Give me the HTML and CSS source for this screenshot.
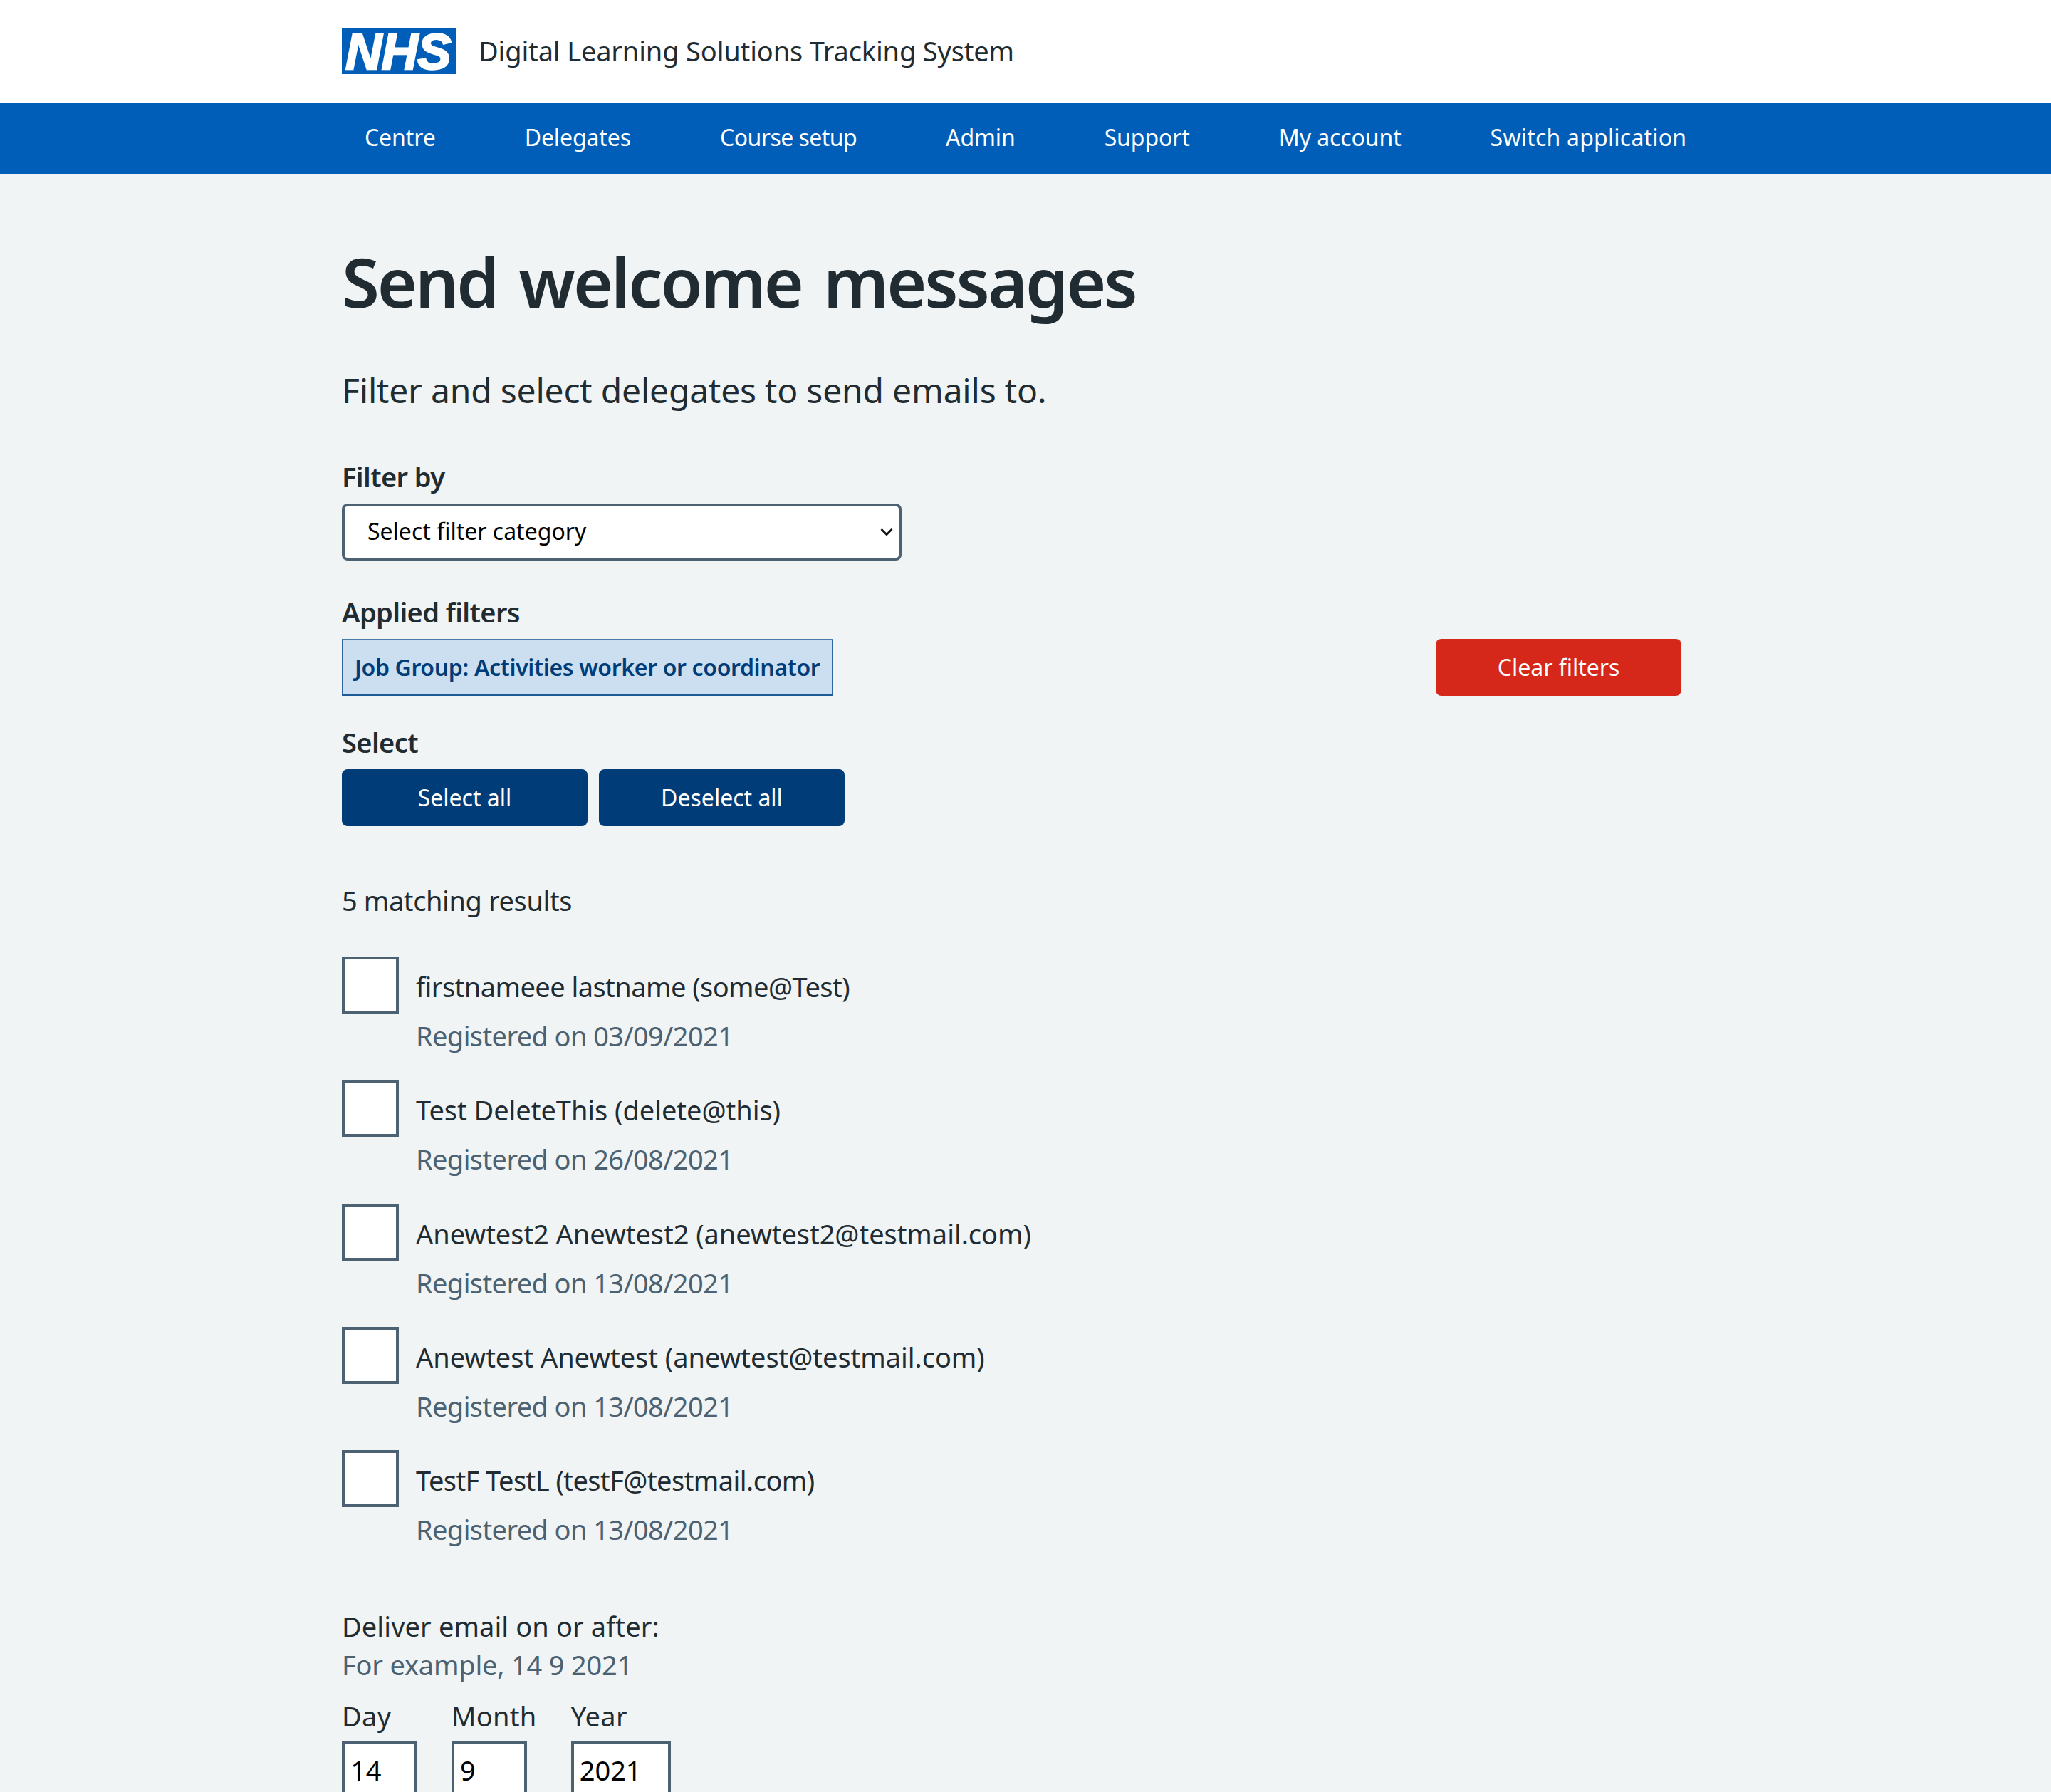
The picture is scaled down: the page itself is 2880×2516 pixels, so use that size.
FILE: index.html
```html
<!DOCTYPE html>
<html lang="en">
<head>
    <meta charset="UTF-8">
    <title>Send welcome messages</title>
    <link rel="stylesheet" href="styles.css">
</head>
<body>
    <header class="site-header">
        <div class="container header-row">
            <svg class="nhs-logo" xmlns="http://www.w3.org/2000/svg" width="160" height="64" viewBox="0 0 160 64">
                <rect width="160" height="64" fill="#005eb8"/>
                <text x="5" y="57" class="nhs-logo-text" textLength="148" lengthAdjust="spacingAndGlyphs">NHS</text>
            </svg>
            <span class="site-name">Digital Learning Solutions Tracking System</span>
        </div>
    </header>

    <nav class="site-nav">
        <ul class="container nav-list">
            <li><a href="#">Centre</a></li>
            <li><a href="#">Delegates</a></li>
            <li><a class="nav-tight" href="#">Course setup</a></li>
            <li><a href="#">Admin</a></li>
            <li><a href="#">Support</a></li>
            <li><a href="#">My account</a></li>
            <li><a class="nav-wide" href="#">Switch application</a></li>
        </ul>
    </nav>

    <main class="container main">
        <h1>Send welcome messages</h1>
        <p class="lead">Filter and select delegates to send emails to.</p>

        <label class="label-bold" for="filter-by">Filter by</label>
        <select class="select" id="filter-by">
            <option>Select filter category</option>
        </select>

        <div class="label-bold applied-label">Applied filters</div>
        <div class="filter-row">
            <span class="filter-tag">Job Group: Activities worker or coordinator</span>
            <a class="button button-red" href="#">Clear filters</a>
        </div>

        <div class="label-bold select-label">Select</div>
        <div class="button-row">
            <a class="button button-dark" href="#">Select all</a>
            <a class="button button-dark" href="#">Deselect all</a>
        </div>

        <p class="results-count">5 matching results</p>

        <div class="check-list">
            <div class="check-item">
                <span class="check-box"></span>
                <div>
                    <div class="check-name check-name-tight">firstnameee lastname (some@Test)</div>
                    <div class="hint">Registered on 03/09/2021</div>
                </div>
            </div>
            <div class="check-item">
                <span class="check-box"></span>
                <div>
                    <div class="check-name">Test DeleteThis (delete@this)</div>
                    <div class="hint">Registered on 26/08/2021</div>
                </div>
            </div>
            <div class="check-item">
                <span class="check-box"></span>
                <div>
                    <div class="check-name">Anewtest2 Anewtest2 (anewtest2@testmail.com)</div>
                    <div class="hint">Registered on 13/08/2021</div>
                </div>
            </div>
            <div class="check-item">
                <span class="check-box"></span>
                <div>
                    <div class="check-name">Anewtest Anewtest (anewtest@testmail.com)</div>
                    <div class="hint">Registered on 13/08/2021</div>
                </div>
            </div>
            <div class="check-item">
                <span class="check-box"></span>
                <div>
                    <div class="check-name check-name-tight">TestF TestL (testF@testmail.com)</div>
                    <div class="hint">Registered on 13/08/2021</div>
                </div>
            </div>
        </div>

        <div class="date-title">Deliver email on or after:</div>
        <div class="hint date-hint">For example, 14 9 2021</div>
        <div class="date-fields">
            <div class="date-field">
                <label for="day">Day</label>
                <input class="date-input" id="day" value="14">
            </div>
            <div class="date-field">
                <label for="month">Month</label>
                <input class="date-input" id="month" value="9">
            </div>
            <div class="date-field">
                <label for="year">Year</label>
                <input class="date-input date-input-year" id="year" value="2021">
            </div>
        </div>
    </main>
</body>
</html>
```

FILE: styles.css
```css
:root {
    --blue: #005eb8;
    --dark-blue: #003d78;
    --text: #212b32;
    --grey: #4c6272;
    --bg: #f0f4f5;
}

html, body {
    height: 100%;
    overflow: hidden;
}

body {
    margin: 0;
    background-color: var(--bg);
    color: var(--text);
    font-family: "Noto Sans", sans-serif;
    font-size: 38px;
    line-height: 56px;
    letter-spacing: -0.6px;
}

.container {
    width: 1920px;
    margin: 0 auto;
    box-sizing: border-box;
}

.site-header {
    background-color: #fff;
    height: 144px;
}

.header-row {
    display: flex;
    align-items: center;
    gap: 32px;
    height: 144px;
}

.nhs-logo {
    display: block;
    overflow: visible;
}

.nhs-logo-text {
    fill: #fff;
    stroke: #fff;
    stroke-width: 2.4px;
    font-family: "Liberation Sans", sans-serif;
    font-weight: bold;
    font-style: italic;
    font-size: 70px;
}

.site-name {
    margin-bottom: 3px;
    letter-spacing: -0.16px;
}

.site-nav {
    background-color: var(--blue);
    height: 101px;
}

.nav-list {
    display: flex;
    list-style: none;
    margin: 0 auto;
    padding: 0;
    height: 101px;
    align-items: center;
}

.nav-list a {
    display: block;
    padding: 0 32px 3px;
    margin-right: 61px;
    color: #fff;
    font-size: 32px;
    letter-spacing: -0.1px;
    text-decoration: none;
    white-space: nowrap;
}

.nav-list .nav-tight {
    letter-spacing: -0.55px;
}

.nav-list .nav-wide {
    letter-spacing: 0.2px;
}

h1 {
    margin: 0;
    padding-top: 94px;
    font-size: 96px;
    line-height: 112px;
    font-weight: 600;
    letter-spacing: -3px;
    word-spacing: 8px;
}

.lead {
    margin: 65px 0 0;
    font-size: 48px;
    line-height: 64px;
    letter-spacing: -0.2px;
}

.label-bold {
    display: block;
    font-weight: 600;
    font-size: 38px;
    line-height: 56px;
}

label.label-bold {
    margin-top: 61px;
    margin-bottom: 10px;
}

.select {
    display: block;
    width: 786px;
    height: 80px;
    box-sizing: border-box;
    border: 4px solid var(--grey);
    border-radius: 8px;
    background: #fff url("data:image/svg+xml,%3Csvg xmlns='http://www.w3.org/2000/svg' width='18' height='12' viewBox='0 0 18 12'%3E%3Cpath d='M1.5 2l7.5 7.5 7.5-7.5' fill='none' stroke='%23111' stroke-width='2.8'/%3E%3C/svg%3E") no-repeat right 8px center;
    appearance: none;
    padding: 0 32px 3px;
    font-family: inherit;
    font-size: 32px;
    color: #000;
}

.applied-label {
    margin-top: 44px;
    margin-bottom: 10px;
}

.filter-row {
    display: flex;
    justify-content: space-between;
    width: 1881px;
}

.filter-tag {
    display: flex;
    align-items: center;
    box-sizing: border-box;
    width: 690px;
    height: 80px;
    padding: 0 16px;
    background-color: #cbdff1;
    border: 2px solid;
    border-color: #4a7cad #2f669f #1f5a96 #2f669f;
    color: var(--dark-blue);
    font-size: 32px;
    font-weight: 600;
    letter-spacing: -0.35px;
}

.button {
    display: flex;
    align-items: center;
    justify-content: center;
    box-sizing: border-box;
    width: 345px;
    height: 80px;
    border-radius: 8px;
    color: #fff;
    font-size: 32px;
    letter-spacing: 0;
    text-decoration: none;
}

.button-red {
    background-color: #d5281b;
}

.button-dark {
    background-color: var(--dark-blue);
}

.select-label {
    margin-top: 37px;
    margin-bottom: 10px;
}

.button-row {
    display: flex;
    gap: 16px;
}

.results-count {
    margin: 76px 0 0;
    letter-spacing: -0.4px;
}

.check-list {
    display: flex;
    flex-direction: column;
    gap: 17.25px;
    margin-top: 51px;
}

.check-item {
    display: flex;
    gap: 24px;
    min-height: 156px;
}

.check-box {
    flex: none;
    width: 80px;
    height: 80px;
    box-sizing: border-box;
    border: 4px solid var(--grey);
    background-color: #fff;
}

.check-name {
    padding-top: 14px;
    line-height: 56px;
    letter-spacing: -0.04px;
}

.check-name-tight {
    letter-spacing: -0.55px;
}

.hint {
    color: var(--grey);
    line-height: 56px;
}

.check-name + .hint {
    margin-top: 13px;
}

.date-title {
    margin-top: 63px;
    letter-spacing: 0.1px;
}

.date-hint {
    margin-top: -2px;
    letter-spacing: -0.2px;
}

.date-fields {
    display: flex;
    gap: 48px;
    margin-top: 16px;
}

.date-field label {
    display: block;
    margin-bottom: 8px;
    letter-spacing: 0.3px;
}

.date-input {
    display: block;
    box-sizing: border-box;
    width: 106px;
    height: 80px;
    border: 4px solid var(--grey);
    border-radius: 0;
    padding: 0 8px;
    background: #fff;
    font-family: inherit;
    font-size: 38px;
    color: #000;
}

.date-input-year {
    width: 140px;
}
```
